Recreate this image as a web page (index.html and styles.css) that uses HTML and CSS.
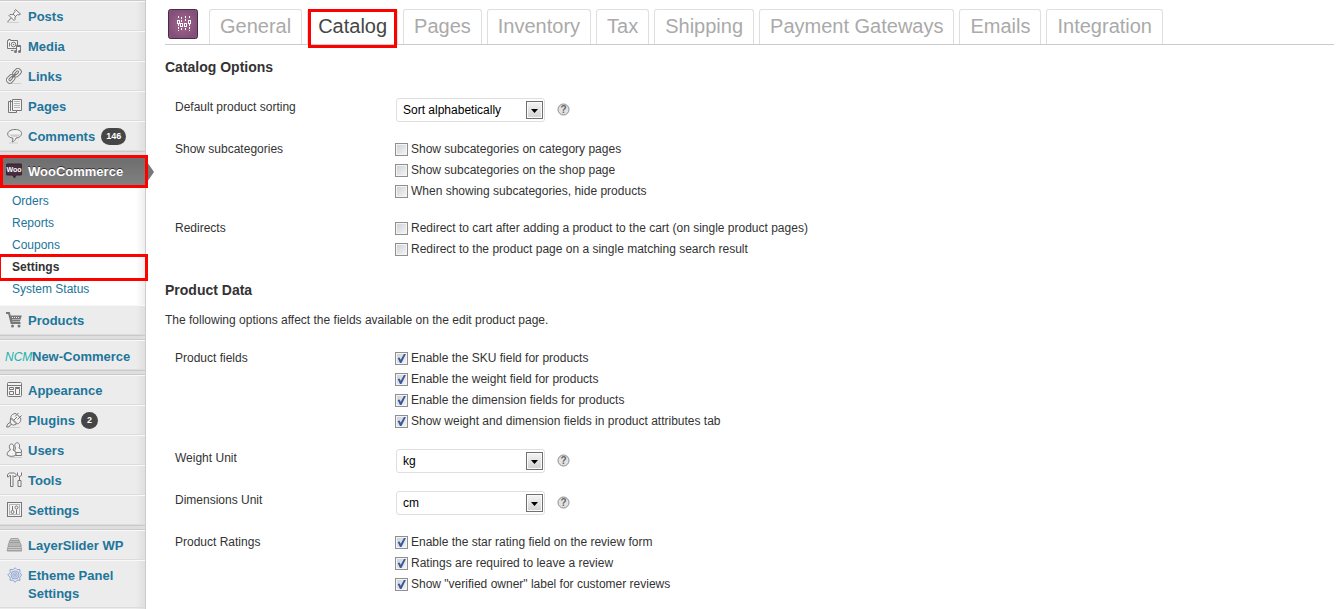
FILE: index.html
```html
<!DOCTYPE html>
<html lang="en">
<head>
<meta charset="utf-8">
<title>WooCommerce Settings</title>
<link rel="stylesheet" href="styles.css">
</head>
<body>
<div class="admin">
  <nav class="sidebar" aria-label="Admin menu">
    <ul class="menu">
      <li class="item"><a href="#">
        <svg class="icon" viewBox="0 0 16 16"><path class="haze" d="M1 14.500h12"/><path d="M6 9L1.500 14"/><path class="fill" d="M9.500 1.500l5 4.500-1.500 1-1.500-.5-2.500 2.500 0 2.500-1 1-5-5 1-1 2.500.2L9 3.500l-.3-1z"/><path d="M7 6l3 3"/></svg>
        <span>Posts</span></a></li>
      <li class="item"><a href="#">
        <svg class="icon" viewBox="0 0 16 16"><path class="fill" d="M1.500 2.500h1v-1h2v1h7v8h-10z"/><circle cx="7.500" cy="6.500" r="2.300"/><circle class="solid" cx="7.500" cy="6.500" r=".8"/><path d="M3.500 4.500v4"/><path class="fill" d="M10.500 13.500v-6h4v6"/><path d="M10.500 8.500h4"/><circle class="solid" cx="9.500" cy="13.500" r="1.500"/><circle class="solid" cx="13.500" cy="13.500" r="1.500"/><path d="M5 12.500h2.500"/></svg>
        <span>Media</span></a></li>
      <li class="item"><a href="#">
        <svg class="icon" viewBox="0 0 16 16"><path class="haze" d="M3 15.500h12"/><g transform="rotate(-45 8 8)"><rect class="fill" x="-1" y="4.500" width="9" height="6.500" rx="3"/><rect class="fill" x="8" y="4.500" width="9" height="6.500" rx="3"/><rect x="1.500" y="6.700" width="4.500" height="2" rx="1"/><rect x="10" y="6.700" width="4.500" height="2" rx="1"/><path class="bold" d="M5.500 7.700h5"/></g></svg>
        <span>Links</span></a></li>
      <li class="item"><a href="#">
        <svg class="icon" viewBox="0 0 16 16"><path class="fill" d="M2.500 3.500v11h8v-11z"/><path d="M4.500 2v11"/><path class="fill" d="M6.500 1.500h9v11h-9z"/><path class="thin" d="M8 3.500h6M8 5.500h6M8 7.500h6M8 9.500h6"/></svg>
        <span>Pages</span></a></li>
      <li class="item"><a href="#">
        <svg class="icon" viewBox="0 0 16 16"><path class="haze" d="M3 15h9"/><path class="fill" d="M9 1.500c4 0 6.500 1.500 6.500 4s-2.500 4.500-5.500 4.500c-.5 2-2 3.500-4 4 .8-1.200 1-2.500.8-4C4 10 1.700 8.300 1.700 6c0-2.700 3.300-4.500 7.300-4.500z"/><path class="shade" d="M3.500 6.500h10.500c-.5 1.500-2 2.500-5 2.500s-5-1-5.500-2.500z"/></svg>
        <span>Comments</span><span class="count">146</span></a></li>
      <li class="divider"></li>
      <li class="item current marked"><a href="#">
        <svg class="icon" viewBox="0 0 16 16"><path class="woo" d="M0 2.500q0-1.500 1.500-1.500h13q1.500 0 1.500 1.500v8q0 1.500-1.500 1.500H10l-1.500 3-2-3h-5Q0 12 0 10.500z"/><text class="woo-text" x="8" y="9" text-anchor="middle">Woo</text></svg>
        <span>WooCommerce</span></a></li>
      <li class="sub">
        <ul class="submenu">
          <li><a href="#">Orders</a></li>
          <li><a href="#">Reports</a></li>
          <li><a href="#">Coupons</a></li>
          <li class="marked selected"><a href="#" aria-current="page">Settings</a></li>
          <li><a href="#">System Status</a></li>
        </ul>
      </li>
      <li class="item"><a href="#">
        <svg class="icon" viewBox="0 0 16 16"><path class="bold" d="M0 1h3l2.500 10h9"/><path class="solid" d="M4 3.500h11.800l-2 6H5.500z"/><path class="dots" d="M6 5.500h8M6.500 7.500h7"/><circle class="solid" cx="6.500" cy="14" r="1.500"/><circle class="solid" cx="13" cy="14" r="1.500"/></svg>
        <span>Products</span></a></li>
      <li class="divider"></li>
      <li class="item brand"><a href="#"><span class="ncm">NCM</span><span>New-Commerce</span></a></li>
      <li class="divider"></li>
      <li class="item"><a href="#">
        <svg class="icon" viewBox="0 0 16 16"><rect class="fill" x="1.500" y=".5" width="14" height="14" rx="1"/><path d="M2 3.500h13"/><path d="M3.500 5.500h4v2h-4zM3.500 9.500h4v3h-4zM9.500 6.500h4v6h-4zM9 5.500h5"/></svg>
        <span>Appearance</span></a></li>
      <li class="item"><a href="#">
        <svg class="icon" viewBox="0 0 16 16"><path class="haze" d="M4 15.500h10"/><path d="M4 10.500q-3 1-3.500 4.500M6 12q-2 .5-3 3H.5"/><path class="fill" d="M5 5.500L11.500 12c2.500-1 4-3.500 3-6L10 1.500C7 1.500 4.500 3.500 5 5.500z"/><path class="fill" d="M4.500 6l6 6q-3 2-5 .5T4.500 6z"/><path d="M9 4.500L12.500 1M11.500 7.500L15.500 3.500M8 8l3-3"/></svg>
        <span>Plugins</span><span class="count">2</span></a></li>
      <li class="item"><a href="#">
        <svg class="icon" viewBox="0 0 16 16"><path class="haze" d="M4 15.500h12"/><path class="fill" d="M9.500 6C8 3 9 .8 11 .8S14.500 3 13 6c2 1 2.700 2 2.500 4.500-1 1.500-6 1.500-7.300 0z"/><path class="fill" d="M4.500 8C2.500 5 3.300 2 5.500 2S8.500 5 7 8c2.500 1 3.500 3 3 5-2 1.800-7 1.800-8.800 0C1 11 2 9 4.500 8z"/><path class="fill" d="M10 10.500h4.500q1.500 1 1 3h-5.500z"/></svg>
        <span>Users</span></a></li>
      <li class="item"><a href="#">
        <svg class="icon" viewBox="0 0 16 16"><path class="fill" d="M1.500 2.500l2-1.500h5l1.500 1.500v2H8l-1-1v11H4.500v-11h-1l-1 1.500h-1z"/><path d="M13.500 1v7"/><path class="fill" d="M12 8.500h3v6h-3zM11.500.5v3q2 2 4 0v-3"/></svg>
        <span>Tools</span></a></li>
      <li class="item"><a href="#">
        <svg class="icon" viewBox="0 0 16 16"><rect class="fill" x="1.500" y=".5" width="14" height="14"/><rect class="thin" x="3.500" y="2.500" width="10" height="10"/><path d="M6.500 4v4.500M10.500 7.500V12"/><circle cx="6.500" cy="10" r="1.500"/><circle cx="10.500" cy="5.500" r="1.500"/></svg>
        <span>Settings</span></a></li>
      <li class="divider"></li>
      <li class="item"><a href="#">
        <svg class="icon pale" viewBox="0 0 16 16"><path class="fill" d="M5 1.500h7l2 3.500H3zM3 5.500h11l1.500 3.500H2zM2 9.500h13l.8 4.500H1.200z"/><path d="M4 3.500h9M3 7h12M2 11.500h13M1 13.500h15"/></svg>
        <span>LayerSlider WP</span></a></li>
      <li class="item"><a href="#">
        <svg class="icon blue" viewBox="0 0 16 16"><path class="fill" d="M9 .7l2 2 3-.2-.2 3L15.600 8l-1.800 2.300.2 3-3-.2-2 2.200-2-2.200-3 .2.200-3L1.700 8l2.500-2.500-.2-3 3 .2z"/><circle cx="9" cy="8" r="4"/><rect x="7" y="6" width="4" height="4" rx="1"/><circle cx="9" cy="8" r=".6"/></svg>
        <span>Etheme Panel Settings</span></a></li>
    </ul>
  </nav>

  <main class="content">
    <header class="tabs">
      <svg class="tabs-icon" viewBox="0 0 30 30" aria-hidden="true"><defs><radialGradient id="plum"><stop offset="0" stop-color="#a5688f"/><stop offset="1" stop-color="#83507a"/></radialGradient></defs><rect x=".5" y=".5" width="29" height="29" rx="2" fill="url(#plum)" stroke="#4d2b45"/><path d="M10.500 7v3M10.500 15v7M13.500 8v5M13.500 19v3M17.500 7v6M17.500 19v3M21.500 7v3M21.500 15v7" stroke="#fff" stroke-dasharray="2 1"/><path d="M9 11h3v4H9zM12 14h3v4h-3zM16 14h3v4h-3zM20 11h3v4h-3z" fill="#fff"/><path d="M10 12h1v2h-1zM13 15h1v2h-1zM17 15h1v2h-1zM21 12h1v2h-1z" fill="#8d5580"/></svg>
      <nav class="tab-list" aria-label="Settings sections">
        <a class="tab" href="#">General</a>
        <a class="tab active marked" href="#" aria-current="page">Catalog</a>
        <a class="tab" href="#">Pages</a>
        <a class="tab" href="#">Inventory</a>
        <a class="tab" href="#">Tax</a>
        <a class="tab" href="#">Shipping</a>
        <a class="tab" href="#">Payment Gateways</a>
        <a class="tab" href="#">Emails</a>
        <a class="tab" href="#">Integration</a>
      </nav>
    </header>

    <form class="form">
      <section>
        <h2>Catalog Options</h2>
        <div class="rows">
          <div class="row">
            <label class="name" for="sorting">Default product sorting</label>
            <div class="pick">
              <span class="select"><select id="sorting"><option>Sort alphabetically</option></select></span>
              <svg class="help" viewBox="0 0 13 13" role="img" aria-label="Help"><circle cx="6.500" cy="6.500" r="5.500"/><text x="6.500" y="10" text-anchor="middle">?</text></svg>
            </div>
          </div>
          <div class="row" role="group" aria-labelledby="subcats">
            <span class="name" id="subcats">Show subcategories</span>
            <div class="checks">
              <label><input type="checkbox">Show subcategories on category pages</label>
              <label><input type="checkbox">Show subcategories on the shop page</label>
              <label><input type="checkbox">When showing subcategories, hide products</label>
            </div>
          </div>
          <div class="row" role="group" aria-labelledby="redirects">
            <span class="name" id="redirects">Redirects</span>
            <div class="checks">
              <label><input type="checkbox">Redirect to cart after adding a product to the cart (on single product pages)</label>
              <label><input type="checkbox">Redirect to the product page on a single matching search result</label>
            </div>
          </div>
        </div>
      </section>

      <section>
        <h2>Product Data</h2>
        <p class="intro">The following options affect the fields available on the edit product page.</p>
        <div class="rows">
          <div class="row" role="group" aria-labelledby="fields">
            <span class="name" id="fields">Product fields</span>
            <div class="checks">
              <label><input type="checkbox" checked>Enable the SKU field for products</label>
              <label><input type="checkbox" checked>Enable the weight field for products</label>
              <label><input type="checkbox" checked>Enable the dimension fields for products</label>
              <label><input type="checkbox" checked>Show weight and dimension fields in product attributes tab</label>
            </div>
          </div>
          <div class="row">
            <label class="name" for="weight">Weight Unit</label>
            <div class="pick">
              <span class="select"><select id="weight"><option>kg</option></select></span>
              <svg class="help" viewBox="0 0 13 13" role="img" aria-label="Help"><circle cx="6.500" cy="6.500" r="5.500"/><text x="6.500" y="10" text-anchor="middle">?</text></svg>
            </div>
          </div>
          <div class="row">
            <label class="name" for="dimensions">Dimensions Unit</label>
            <div class="pick">
              <span class="select"><select id="dimensions"><option>cm</option></select></span>
              <svg class="help" viewBox="0 0 13 13" role="img" aria-label="Help"><circle cx="6.500" cy="6.500" r="5.500"/><text x="6.500" y="10" text-anchor="middle">?</text></svg>
            </div>
          </div>
          <div class="row" role="group" aria-labelledby="ratings">
            <span class="name" id="ratings">Product Ratings</span>
            <div class="checks">
              <label><input type="checkbox" checked>Enable the star rating field on the review form</label>
              <label><input type="checkbox" checked>Ratings are required to leave a review</label>
              <label><input type="checkbox" checked>Show "verified owner" label for customer reviews</label>
            </div>
          </div>
        </div>
      </section>
    </form>
  </main>
</div>
</body>
</html>
```
FILE: styles.css
```css
*, *::before, *::after { box-sizing: border-box; }

body {
  margin: 0;
  background: #fff;
  color: #333;
  font-family: "Liberation Sans", Arial, sans-serif;
  font-size: 12px;
}

a { color: #21759b; text-decoration: none; }
ul { list-style: none; margin: 0; padding: 0; }

.admin { display: flex; min-height: 100vh; }

/* Sidebar */
.sidebar {
  flex: 0 0 146px;
  background: linear-gradient(to right, #ececec 136px, #dfdfdf 145px);
  border-right: 1px solid #ccc;
}

.menu { padding-top: 1px; box-shadow: inset 0 1px #ccc; }

.item {
  position: relative;
  border-top: 1px solid #f9f9f9;
  border-bottom: 1px solid #dcdcdc;
}

.item > a {
  display: flex;
  align-items: flex-start;
  gap: 6px;
  padding: 6px 0 4px 6px;
  font-size: 13px;
  font-weight: bold;
  line-height: 18px;
}

.divider {
  height: 5px;
  background: #dedede;
  border: 1px solid #cacaca;
  border-width: 1px 0;
}

.icon {
  flex: 0 0 16px;
  height: 16px;
  fill: none;
  stroke: #777;
}
.icon .fill { fill: #f3f3f3; }
.icon .solid { fill: #777; stroke: none; }
.icon .shade { fill: #ccc; stroke: none; }
.icon .thin { stroke: #b5b5b5; }
.icon .haze { stroke: #d0d0d0; }
.icon .bold { stroke-width: 2; }
.icon .dots { stroke: #eee; stroke-dasharray: 1 1; }
.icon.pale { stroke: #a0a0a0; }
.icon.pale .fill { fill: #ccc; }
.icon.blue { stroke: #93a5cc; }
.icon.blue .fill { fill: #e2e8f5; }
.icon .woo { fill: #4b2a43; stroke: #36202f; }
.icon .woo-text { fill: #fff; stroke: none; font-size: 7px; font-weight: bold; }

.count {
  min-width: 17px;
  padding: 0 5px;
  border-radius: 9px;
  background: #464646;
  color: #fff;
  font-size: 9px;
  line-height: 17px;
  text-align: center;
}

.brand > a { gap: 0; padding: 7px 0 3px 5px; }
.ncm {
  width: 27px;
  color: #20b2ac;
  font-size: 12px;
  font-style: italic;
  font-weight: normal;
}

.current {
  background: linear-gradient(#6d6d6d, #808080);
  border-color: #6d6d6d;
}
.current > a { color: #fff; text-shadow: 0 -1px #333; }
.current::before {
  content: "";
  position: absolute;
  top: 2px;
  left: 100%;
  width: 9px;
  height: 26px;
  background: #777;
  clip-path: polygon(0 0, 100% 50%, 0 100%);
}

.submenu { padding: 4px 0 5px; background: linear-gradient(to right, #fff 136px, #eee 145px); }
.submenu li { position: relative; }
.submenu a { display: block; padding: 0 12px; line-height: 22px; }
.submenu .selected a { color: #333; font-weight: bold; }

/* Red outline drawn over highlighted entries */
.marked::after {
  content: "";
  position: absolute;
  inset: -2px -3px -3px 0;
  border: 3px solid #f00;
  pointer-events: none;
}
.submenu .marked::after { left: -2px; }

/* Content */
.content { flex: 1; min-width: 0; padding: 9px 8px 0 19px; }

.tabs {
  display: flex;
  gap: 11px;
  height: 36px;
  padding-left: 3px;
  border-bottom: 1px solid #ccc;
}
.tabs-icon { flex: 0 0 30px; height: 30px; }

.tab-list { display: flex; gap: 5px; }
.tab {
  padding: 0 10px;
  border: 1px solid #dfdfdf;
  border-bottom: 0;
  border-radius: 3px 3px 0 0;
  color: #aaa;
  font-size: 20px;
  line-height: 32px;
  white-space: nowrap;
}
.tab.active { position: relative; background: #fff; color: #464646; }
.tab.marked::after { inset: -1px 0 -4px; }

h2 { margin: 0; font-size: 14px; line-height: 20px; }
.form section { padding-top: 12px; }
.form section + section { padding-top: 20px; }
.intro { margin: 10px 0 0; line-height: 20px; }

.rows { display: grid; gap: 16px; padding: 20px 0 0 10px; }
.intro + .rows { padding-top: 18px; }
.row { display: grid; grid-template-columns: 220px 1fr; line-height: 21px; }

.checks { display: grid; justify-items: start; }
.checks label { display: flex; align-items: center; gap: 3px; }

input[type="checkbox"] {
  appearance: none;
  width: 13px;
  height: 13px;
  margin: 0;
  border: 1px solid #8e8f8f;
  background: linear-gradient(135deg, #cbcfd5, #f6f6f6);
  box-shadow: inset 0 0 0 1px #f4f4f4;
}
input[type="checkbox"]:checked::before {
  content: "";
  display: block;
  width: 11px;
  height: 11px;
  background: #3b5a9c;
  clip-path: polygon(15% 46%, 32% 42%, 43% 62%, 72% 8%, 90% 8%, 50% 92%, 36% 92%);
}

.pick { display: flex; align-items: center; gap: 12px; height: 26px; padding-left: 1px; }
.select { position: relative; }
.select select {
  appearance: none;
  display: block;
  width: 149px;
  height: 24px;
  padding: 0 24px 0 6px;
  border: 1px solid #dfdfdf;
  border-radius: 3px;
  background: #fff;
  color: #000;
  font: inherit;
}
.select::before {
  content: "";
  position: absolute;
  top: 3px;
  right: 2px;
  width: 17px;
  height: 18px;
  border: 1px solid #707070;
  background: linear-gradient(#f4f4f4, #d2d2d2);
  box-shadow: inset 0 0 0 1px #fafafa;
  pointer-events: none;
}
.select::after {
  content: "";
  position: absolute;
  top: 11px;
  right: 7px;
  width: 7px;
  height: 4px;
  background: #000;
  clip-path: polygon(0 0, 100% 0, 50% 100%);
  pointer-events: none;
}

.help { width: 13px; height: 13px; margin-bottom: 2px; }
.help circle { fill: #e2e2e2; stroke: #8c8c8c; }
.help text { fill: #666; font-size: 10px; font-weight: bold; }
```
